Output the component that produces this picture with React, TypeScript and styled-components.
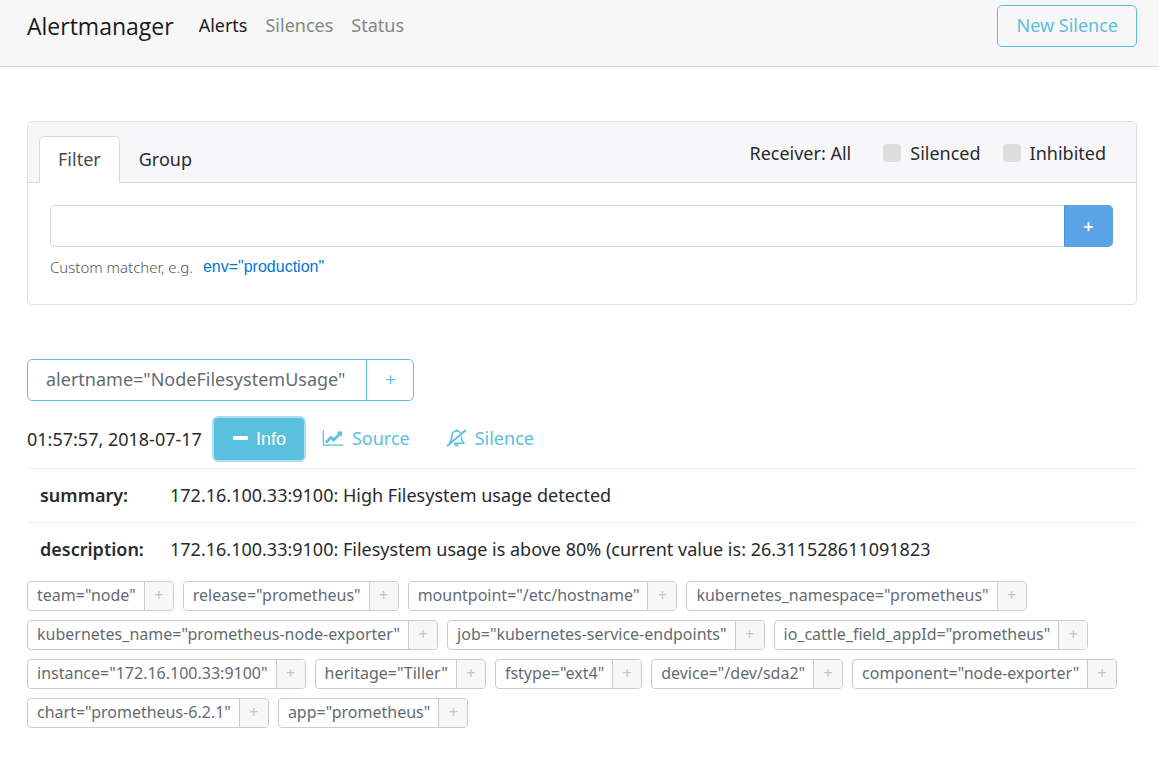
import React, { useState } from 'react';
import styled, { createGlobalStyle, css } from 'styled-components';

const GlobalStyle = createGlobalStyle`
  *, *::before, *::after { box-sizing: border-box; }
  body {
    margin: 0;
    background: #fff;
    color: #292b2c;
    font-family: 'Noto Sans', 'Open Sans', sans-serif;
    font-size: 18px;
    font-weight: 400;
    line-height: 28px;
  }
  button, input { font: inherit; }
  a { text-decoration: none; }
`;

const info = '#5bc0de';

const Navbar = styled.header`
  display: flex;
  align-items: flex-start;
  padding: 5px 22px 19px 27px;
  background: #f7f7f7;
  border-bottom: 1px solid #d6d6d6;
`;

const Brand = styled.a`
  margin-right: 25px;
  color: #1a1a1a;
  font-family: 'Open Sans', sans-serif;
  font-size: 23px;
  line-height: 42px;
`;

const NavLinks = styled.nav`
  display: flex;
  flex: 1;
  gap: 18px;
`;

const NavLink = styled.a<{ $active?: boolean }>`
  color: ${(p) => (p.$active ? '#1a1a1a' : '#868686')};
  line-height: 40px;
`;

const OutlineButton = styled.button`
  height: 42px;
  padding: 0 18px 2px;
  border: 1px solid ${info};
  border-radius: 5px;
  background: transparent;
  color: ${info};
`;

const Main = styled.main`
  padding: 54px 22px 40px 27px;
`;

const Card = styled.section`
  border: 1px solid #dedfe0;
  border-radius: 5px;
`;

const CardHeader = styled.div`
  display: flex;
  justify-content: space-between;
  padding: 14px 30px 0 11px;
  border-bottom: 1px solid #d9dadb;
  background: #f7f7f9;
  border-radius: 4px 4px 0 0;
`;

const Tabs = styled.div`
  display: flex;
  margin-bottom: -1px;
`;

const Tab = styled.button<{ $active?: boolean }>`
  height: 47px;
  padding: 0 18px 2px;
  border: 1px solid transparent;
  border-bottom: 0;
  border-radius: 5px 5px 0 0;
  background: transparent;
  color: #292b2c;
  ${(p) =>
    p.$active &&
    css`
      border-color: #d9dadb;
      background: #fff;
      color: #464a4c;
    `}
`;

const Options = styled.div`
  display: flex;
  align-items: center;
  height: 34px;
  gap: 22px;
`;

const Receiver = styled.span`
  margin-right: 10px;
`;

const CheckLabel = styled.label`
  display: flex;
  align-items: center;
  gap: 9px;
`;

const Checkbox = styled.input`
  appearance: none;
  width: 18px;
  height: 18px;
  margin: 0;
  border-radius: 4px;
  background: #ddd;
  &:checked { background: #0275d8; }
`;

const CardBody = styled.div`
  padding: 22px 23px 25px 22px;
`;

const InputGroup = styled.div`
  display: flex;
`;

const MatcherInput = styled.input`
  flex: 1;
  min-width: 0;
  height: 42px;
  padding: 0 14px;
  border: 1px solid #d9d9d9;
  border-right: 0;
  border-radius: 5px 0 0 5px;
  outline: 0;
`;

const AddButton = styled.button`
  width: 49px;
  height: 42px;
  padding: 0;
  border: 1px solid #5aa3e4;
  border-left-color: #4394dc;
  border-radius: 0 5px 5px 0;
  background: #5aa3e4;
  color: #fff;
  font-weight: 600;
`;

const Help = styled.div`
  display: flex;
  gap: 10px;
  margin-top: 8px;
  color: #50585d;
  font-size: 15px;
  font-weight: 300;
  line-height: 24px;
`;

const ExampleLink = styled.a`
  color: #0275d8;
  font-family: 'Liberation Sans', Arial, sans-serif;
  font-size: 16px;
  font-weight: 400;
`;

const AlertGroup = styled.div`
  display: flex;
  width: fit-content;
  margin-top: 54px;
  border: 1px solid ${info};
  border-radius: 5px;
`;

const GroupName = styled.span`
  padding: 0 21px 2px 18px;
  color: #636c72;
  line-height: 38px;
`;

const GroupAdd = styled.button`
  width: 47px;
  padding: 0 0 2px;
  border: 0;
  border-left: 1px solid ${info};
  background: transparent;
  color: ${info};
`;

const AlertBar = styled.div`
  display: flex;
  align-items: center;
  margin: 17px 0 8px;
`;

const Time = styled.time`
  margin-right: 12px;
`;

const InfoButton = styled.button`
  display: flex;
  align-items: center;
  gap: 8px;
  height: 42px;
  padding: 0 18px;
  border: 0;
  border-radius: 4px;
  background: ${info};
  box-shadow: 0 0 0 2px #ade0ef;
  color: #fff;
  font-family: 'Liberation Sans', Arial, sans-serif;
`;

const ActionLink = styled.a`
  display: flex;
  align-items: center;
  gap: 8px;
  padding: 0 18px 2px;
  color: ${info};
`;

const Annotations = styled.table`
  width: 100%;
  border-collapse: collapse;
  th, td {
    height: 54px;
    padding: 0 13px 2px;
    border-top: 1px solid #eceeef;
    text-align: left;
  }
  th {
    width: 130px;
    font-weight: 600;
  }
`;

const Chips = styled.div`
  display: flex;
  flex-wrap: wrap;
  gap: 9px;
  margin-top: 4px;
`;

const ChipBox = styled.div`
  display: inline-flex;
  height: 30px;
  border: 1px solid #ccc;
  border-radius: 4px;
  overflow: hidden;
`;

const ChipText = styled.span`
  padding: 0 8px 0 9px;
  color: #636c72;
  font-size: 16px;
  line-height: 27px;
`;

const ChipAdd = styled.button`
  width: 29px;
  padding: 0;
  border: 0;
  border-left: 1px solid #ccc;
  background: #f7f7f7;
  color: #c4c4c4;
  font-size: 16px;
  line-height: 27px;
`;

const ChartIcon = () => (
  <svg width="22" height="18" viewBox="0 0 2048 1792" fill="currentColor" aria-hidden="true">
    <path d="M2048 1536v128h-2048v-1536h128v1408h1920zm-128-1248v435q0 21-19.500 29.500t-35.500-7.500l-121-121-633 633q-10 10-23 10t-23-10l-233-233-416 416-192-192 585-585q10-10 23-10t23 10l233 233 464-464-121-121q-16-16-7.500-35.500t29.500-19.500h435q14 0 23 9t9 23z" />
  </svg>
);

const BellSlashIcon = () => (
  <svg width="21" height="20" viewBox="0 0 20 20" fill="none" stroke="currentColor" aria-hidden="true">
    <path d="M.6 18 19.400 2" strokeWidth="2" />
    <path d="M3 14.800C4.800 13 5.400 11 5.400 7.800 5.400 4.800 7.300 3 10 3c1.700 0 3 .6 3.800 1.800M14.700 8.500c.1 3 .8 4.600 2.500 6.700H7.500" strokeWidth="1.600" />
    <path d="M10 3V1.400" strokeWidth="2" />
    <path d="M7.700 16.200h4.600a2.300 2.300 0 0 1-4.600 0z" fill="currentColor" stroke="none" />
  </svg>
);

const MinusIcon = () => (
  <svg width="16" height="18" viewBox="0 0 16 18" fill="currentColor" aria-hidden="true">
    <rect x="1" y="6" width="15" height="4" rx="1" />
  </svg>
);

const labels = [
  'team="node"',
  'release="prometheus"',
  'mountpoint="/etc/hostname"',
  'kubernetes_namespace="prometheus"',
  'kubernetes_name="prometheus-node-exporter"',
  'job="kubernetes-service-endpoints"',
  'io_cattle_field_appId="prometheus"',
  'instance="172.16.100.33:9100"',
  'heritage="Tiller"',
  'fstype="ext4"',
  'device="/dev/sda2"',
  'component="node-exporter"',
  'chart="prometheus-6.2.1"',
  'app="prometheus"',
];

export default function App() {
  const [tab, setTab] = useState('Filter');
  return (
    <>
      <GlobalStyle />
      <Navbar>
        <Brand href="#">Alertmanager</Brand>
        <NavLinks>
          <NavLink href="#alerts" $active>Alerts</NavLink>
          <NavLink href="#silences">Silences</NavLink>
          <NavLink href="#status">Status</NavLink>
        </NavLinks>
        <OutlineButton>New Silence</OutlineButton>
      </Navbar>
      <Main>
        <Card>
          <CardHeader>
            <Tabs>
              {['Filter', 'Group'].map((name) => (
                <Tab key={name} $active={tab === name} onClick={() => setTab(name)}>{name}</Tab>
              ))}
            </Tabs>
            <Options>
              <Receiver>Receiver: All</Receiver>
              <CheckLabel><Checkbox type="checkbox" />Silenced</CheckLabel>
              <CheckLabel><Checkbox type="checkbox" />Inhibited</CheckLabel>
            </Options>
          </CardHeader>
          <CardBody>
            <InputGroup>
              <MatcherInput type="text" aria-label="Custom matcher" />
              <AddButton aria-label="Add matcher">+</AddButton>
            </InputGroup>
            <Help>
              <span>Custom matcher, e.g.</span>
              <ExampleLink href="#example">env="production"</ExampleLink>
            </Help>
          </CardBody>
        </Card>
        <AlertGroup>
          <GroupName>alertname="NodeFilesystemUsage"</GroupName>
          <GroupAdd>+</GroupAdd>
        </AlertGroup>
        <AlertBar>
          <Time>01:57:57, 2018-07-17</Time>
          <InfoButton><MinusIcon />Info</InfoButton>
          <ActionLink href="#source"><ChartIcon />Source</ActionLink>
          <ActionLink href="#silence"><BellSlashIcon />Silence</ActionLink>
        </AlertBar>
        <Annotations>
          <tbody>
            <tr>
              <th scope="row">summary:</th>
              <td>172.16.100.33:9100: High Filesystem usage detected</td>
            </tr>
            <tr>
              <th scope="row">description:</th>
              <td>172.16.100.33:9100: Filesystem usage is above 80% (current value is: 26.311528611091823</td>
            </tr>
          </tbody>
        </Annotations>
        <Chips>
          {labels.map((label) => (
            <ChipBox key={label}>
              <ChipText>{label}</ChipText>
              <ChipAdd>+</ChipAdd>
            </ChipBox>
          ))}
        </Chips>
      </Main>
    </>
  );
}
